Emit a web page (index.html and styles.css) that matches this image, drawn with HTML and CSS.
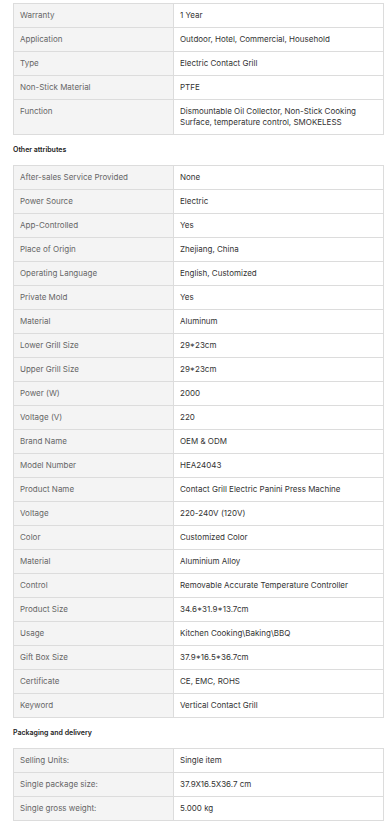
FILE: index.html
```html
<!DOCTYPE html>
<html>
<head>
<meta charset="utf-8">
<link rel="stylesheet" href="styles.css">
</head>
<body>
<div class="page">
  <table class="attrs">
    <tr><td class="k">Warranty</td><td class="v">1 Year</td></tr>
    <tr><td class="k">Application</td><td class="v">Outdoor, Hotel, Commercial, Household</td></tr>
    <tr><td class="k">Type</td><td class="v">Electric Contact Grill</td></tr>
    <tr><td class="k">Non-Stick Material</td><td class="v">PTFE</td></tr>
    <tr><td class="k">Function</td><td class="v">Dismountable Oil Collector, Non-Stick Cooking Surface, temperature control, SMOKELESS</td></tr>
  </table>
  <h3 class="section">Other attributes</h3>
  <table class="attrs">
    <tr><td class="k">After-sales Service Provided</td><td class="v">None</td></tr>
    <tr><td class="k">Power Source</td><td class="v">Electric</td></tr>
    <tr><td class="k">App-Controlled</td><td class="v">Yes</td></tr>
    <tr><td class="k">Place of Origin</td><td class="v">Zhejiang, China</td></tr>
    <tr><td class="k">Operating Language</td><td class="v">English, Customized</td></tr>
    <tr><td class="k">Private Mold</td><td class="v">Yes</td></tr>
    <tr><td class="k">Material</td><td class="v">Aluminum</td></tr>
    <tr><td class="k">Lower Grill Size</td><td class="v">29*23cm</td></tr>
    <tr><td class="k">Upper Grill Size</td><td class="v">29*23cm</td></tr>
    <tr><td class="k">Power (W)</td><td class="v">2000</td></tr>
    <tr><td class="k">Voltage (V)</td><td class="v">220</td></tr>
    <tr><td class="k">Brand Name</td><td class="v">OEM &amp; ODM</td></tr>
    <tr><td class="k">Model Number</td><td class="v">HEA24043</td></tr>
    <tr><td class="k">Product Name</td><td class="v">Contact Grill Electric Panini Press Machine</td></tr>
    <tr><td class="k">Voltage</td><td class="v">220-240V (120V)</td></tr>
    <tr><td class="k">Color</td><td class="v">Customized Color</td></tr>
    <tr><td class="k">Material</td><td class="v">Aluminium Alloy</td></tr>
    <tr><td class="k">Control</td><td class="v">Removable Accurate Temperature Controller</td></tr>
    <tr><td class="k">Product Size</td><td class="v">34.6*31.9*13.7cm</td></tr>
    <tr><td class="k">Usage</td><td class="v">Kitchen Cooking\Baking\BBQ</td></tr>
    <tr><td class="k">Gift Box Size</td><td class="v">37.9*16.5*36.7cm</td></tr>
    <tr><td class="k">Certificate</td><td class="v">CE, EMC, ROHS</td></tr>
    <tr><td class="k">Keyword</td><td class="v">Vertical Contact Grill</td></tr>
  </table>
  <h3 class="section">Packaging and delivery</h3>
  <table class="attrs">
    <tr><td class="k">Selling Units:</td><td class="v">Single item</td></tr>
    <tr><td class="k">Single package size:</td><td class="v">37.9X16.5X36.7 cm</td></tr>
    <tr><td class="k">Single gross weight:</td><td class="v">5.000 kg</td></tr>
  </table>
</div>
</body>
</html>
```
FILE: styles.css
```css
html, body {
  margin: 0;
  padding: 0;
  background: #fff;
}
.page {
  padding: 3px 8px 0 13px;
  font-family: Inter, Roboto, "Liberation Sans", sans-serif;
}
.attrs {
  width: 371px;
  border-collapse: collapse;
  table-layout: fixed;
  font-size: 8px;
  line-height: 11px;
}
.attrs td {
  border: 1px solid #dcdcdc;
  padding: 6px;
  vertical-align: top;
  height: 11px;
}
.attrs .k {
  width: 147px;
  background: #f4f4f4;
  color: #666;
}
.attrs .v {
  color: #333;
  background: #fff;
}
.section {
  margin: 0;
  padding: 10px 0;
  font-size: 7px;
  line-height: 10px;
  font-weight: 600;
  color: #222;
}
```
